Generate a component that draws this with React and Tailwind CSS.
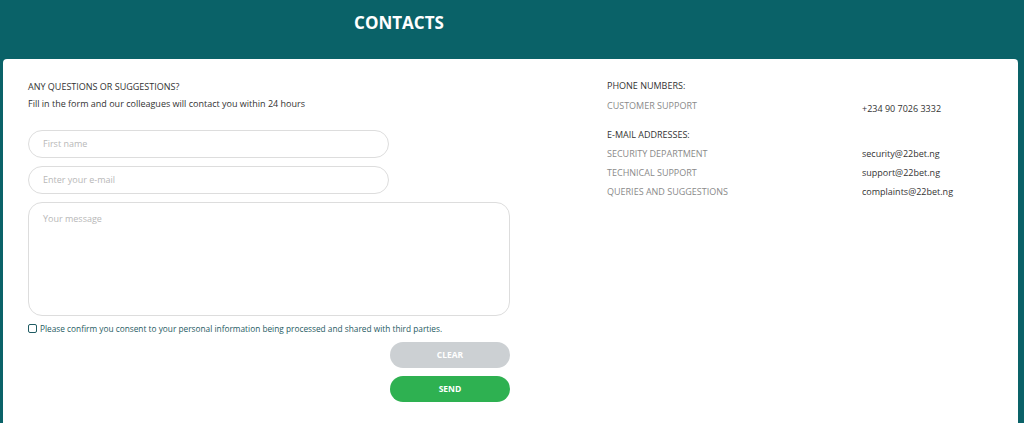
export default function App() {
  const font = { fontFamily: '"Open Sans", "Noto Sans", sans-serif' };
  return (
    <div style={font} className="w-[1024px] h-[423px] bg-[#0a6268] overflow-hidden flex flex-col">
      <div className="h-[59px] shrink-0 flex">
        <div className="w-[798px] pt-[12px] text-center text-white font-bold text-[17px] leading-[22px]">CONTACTS</div>
      </div>
      <div className="ml-[3px] w-[1015px] flex-1 bg-white rounded-t-[4px] flex pl-[25px] pt-[80px]">
        <div className="w-[482px] flex flex-col">
          <div className="text-[9px] leading-[12px] text-[#333] -mt-[58px] mb-[5px]">ANY QUESTIONS OR SUGGESTIONS?</div>
          <div className="text-[9px] leading-[12px] text-[#333]">Fill in the form and our colleagues will contact you within 24 hours</div>
          <div className="mt-[20px] flex flex-col gap-[8px]">
            <div className="w-[361px] h-[28px] rounded-full border border-[#ddd] flex items-center pl-[14px] text-[9px] text-[#b8b8b8]">First name</div>
            <div className="w-[361px] h-[28px] rounded-full border border-[#ddd] flex items-center pl-[14px] text-[9px] text-[#b8b8b8]">Enter your e-mail</div>
            <div className="w-[482px] h-[114px] rounded-[14px] border border-[#ddd] pl-[14px] pt-[10px] text-[9px] leading-[12px] text-[#b8b8b8]">Your message</div>
          </div>
          <div className="mt-[7px] flex items-center gap-[3px]">
            <div className="w-[9px] h-[9px] border border-[#1f5b63] rounded-[2px]"></div>
            <div className="text-[8.3px] leading-[11px] text-[#1f5b63]">Please confirm you consent to your personal information being processed and shared with third parties.</div>
          </div>
          <div className="mt-[8px] flex flex-col items-end gap-[8px]">
            <div className="w-[120px] h-[26px] rounded-full bg-[#ccd0d3] flex items-center justify-center text-white font-bold text-[8.5px]">CLEAR</div>
            <div className="w-[120px] h-[26px] rounded-full bg-[#2eb151] flex items-center justify-center text-white font-bold text-[8.5px]">SEND</div>
          </div>
        </div>
        <div className="ml-[97px] w-[380px] -mt-[59px] text-[9px] leading-[12px]">
          <div className="text-[#333] mb-[8px]">PHONE NUMBERS:</div>
          <div className="flex">
            <div className="w-[255px] text-[#8a8a8a]">CUSTOMER SUPPORT</div>
            <div className="text-[#333] mt-[3px]">+234 90 7026 3332</div>
          </div>
          <div className="text-[#333] mt-[14px] mb-[7px]">E-MAIL ADDRESSES:</div>
          <div className="flex flex-col gap-[7px]">
            <div className="flex">
              <div className="w-[255px] text-[#8a8a8a]">SECURITY DEPARTMENT</div>
              <div className="text-[#333]">security@22bet.ng</div>
            </div>
            <div className="flex">
              <div className="w-[255px] text-[#8a8a8a]">TECHNICAL SUPPORT</div>
              <div className="text-[#333]">support@22bet.ng</div>
            </div>
            <div className="flex">
              <div className="w-[255px] text-[#8a8a8a]">QUERIES AND SUGGESTIONS</div>
              <div className="text-[#333]">complaints@22bet.ng</div>
            </div>
          </div>
        </div>
      </div>
    </div>
  );
}
